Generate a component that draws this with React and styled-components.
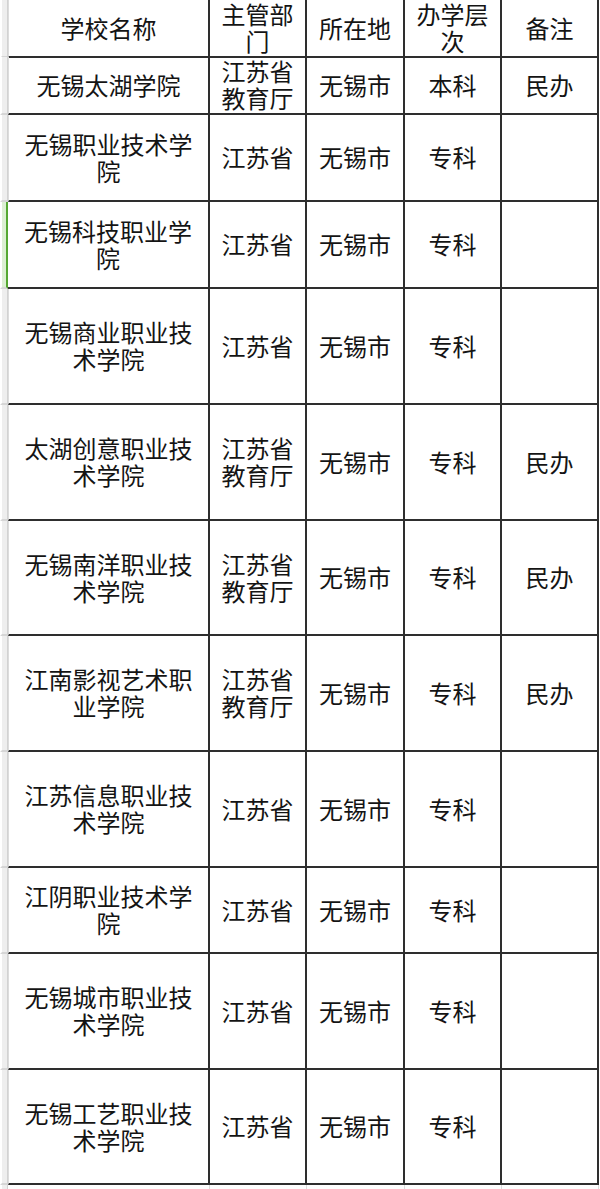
import React from "react";
import styled, { createGlobalStyle, css } from "styled-components";

const Global = createGlobalStyle`
  html, body { margin: 0; padding: 0; background: #ffffff; }
  body {
    font-family: "Noto Sans CJK SC", "Noto Sans", sans-serif;
    color: #111111;
  }
`;

const COLS = "8px 202px 97px 98px 97px 97px";

const Sheet = styled.div`
  display: flex;
  flex-direction: column;
  width: 600px;
  overflow: hidden;
`;

const Row = styled.div`
  display: grid;
  grid-template-columns: ${COLS};
  height: ${(p) => p.$h}px;
`;

const Gutter = styled.div`
  box-sizing: border-box;
  background: ${(p) => (p.$active ? "#dcefd3" : "#eeeeee")};
  border-left: 2px solid #ffffff;
  border-right: ${(p) => (p.$active ? "2px solid #55a832" : "1px solid #d2d2d2")};
  border-bottom: ${(p) => (p.$tail ? "none" : "2px solid #d6d6d6")};
`;

const Cell = styled.div`
  box-sizing: border-box;
  display: flex;
  flex-direction: column;
  align-items: center;
  justify-content: center;
  text-align: center;
  font-size: 24px;
  line-height: 27px;
  color: #141414;
  padding-bottom: 2px;
  border-right: 2px solid #2e2e2e;
  border-bottom: 2px solid #2e2e2e;
  ${(p) =>
    p.$first &&
    css`
      border-left: ${p.$active ? "0" : "1px solid #dcdcdc"};
    `}
  ${(p) =>
    p.$tail &&
    css`
      border-right: 1px solid #dddddd;
      border-bottom: none;
      border-left: none;
      padding-bottom: 0;
    `}
`;

const Line = styled.span`
  display: block;
  white-space: nowrap;
`;

const header = [["学校名称"], ["主管部", "门"], ["所在地"], ["办学层", "次"], ["备注"]];

const rows = [
  { h: 58, c: [["无锡太湖学院"], ["江苏省", "教育厅"], ["无锡市"], ["本科"], ["民办"]] },
  { h: 87, c: [["无锡职业技术学", "院"], ["江苏省"], ["无锡市"], ["专科"], []] },
  { h: 87, active: true, c: [["无锡科技职业学", "院"], ["江苏省"], ["无锡市"], ["专科"], []] },
  { h: 116, c: [["无锡商业职业技", "术学院"], ["江苏省"], ["无锡市"], ["专科"], []] },
  { h: 116, c: [["太湖创意职业技", "术学院"], ["江苏省", "教育厅"], ["无锡市"], ["专科"], ["民办"]] },
  { h: 115, c: [["无锡南洋职业技", "术学院"], ["江苏省", "教育厅"], ["无锡市"], ["专科"], ["民办"]] },
  { h: 116, c: [["江南影视艺术职", "业学院"], ["江苏省", "教育厅"], ["无锡市"], ["专科"], ["民办"]] },
  { h: 116, c: [["江苏信息职业技", "术学院"], ["江苏省"], ["无锡市"], ["专科"], []] },
  { h: 86, c: [["江阴职业技术学", "院"], ["江苏省"], ["无锡市"], ["专科"], []] },
  { h: 116, c: [["无锡城市职业技", "术学院"], ["江苏省"], ["无锡市"], ["专科"], []] },
  { h: 115, c: [["无锡工艺职业技", "术学院"], ["江苏省"], ["无锡市"], ["专科"], []] },
];

function TableRow({ h, cells, active }) {
  return (
    <Row $h={h}>
      <Gutter $active={active} />
      {cells.map((lines, i) => (
        <Cell key={i} $first={i === 0} $active={active}>
          {lines.map((t, j) => (
            <Line key={j}>{t}</Line>
          ))}
        </Cell>
      ))}
    </Row>
  );
}

export default function App() {
  return (
    <>
      <Global />
      <Sheet>
        <TableRow h={57} cells={header} />
        {rows.map((r, i) => (
          <TableRow key={i} h={r.h} cells={r.c} active={r.active} />
        ))}
        <Row $h={5}>
          <Gutter $tail />
          {[0, 1, 2, 3, 4].map((i) => (
            <Cell key={i} $tail />
          ))}
        </Row>
      </Sheet>
    </>
  );
}
